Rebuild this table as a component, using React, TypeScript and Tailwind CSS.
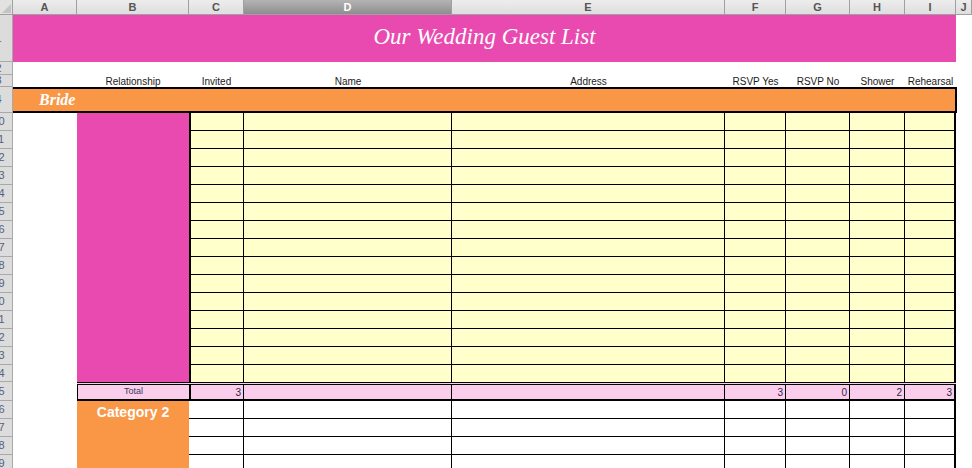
import React from "react";

// column widths of the sheet, A..J (the row-number column is 13px on its own)
const headerCols = [
  { letter: "A", w: "w-[64px]" },
  { letter: "B", w: "w-[112px]" },
  { letter: "C", w: "w-[55px]" },
  { letter: "D", w: "w-[208px]", selected: true },
  { letter: "E", w: "w-[273px]" },
  { letter: "F", w: "w-[61px]" },
  { letter: "G", w: "w-[64px]" },
  { letter: "H", w: "w-[55px]" },
  { letter: "I", w: "w-[51px]" },
  { letter: "J", w: "w-[16px]" },
];

const labels = [
  { text: "", w: "w-[64px]" },
  { text: "Relationship", w: "w-[112px]" },
  { text: "Invited", w: "w-[55px]" },
  { text: "Name", w: "w-[208px]" },
  { text: "Address", w: "w-[273px]" },
  { text: "RSVP Yes", w: "w-[61px]" },
  { text: "RSVP No", w: "w-[64px]" },
  { text: "Shower", w: "w-[55px]" },
  { text: "Rehearsal", w: "w-[51px]" },
];

// data columns C..I inside the bordered grids
const bodyCols = ["w-[53px]", "w-[208px]", "w-[273px]", "w-[61px]", "w-[64px]", "w-[55px]", "w-[49px]"];
const catCols = ["w-[55px]", "w-[208px]", "w-[273px]", "w-[61px]", "w-[64px]", "w-[55px]", "w-[49px]"];

const totals = [
  { value: "3", w: "w-[55px] border-l-2" },
  { value: "", w: "w-[208px]" },
  { value: "", w: "w-[273px]" },
  { value: "3", w: "w-[61px]" },
  { value: "0", w: "w-[64px]" },
  { value: "2", w: "w-[55px]" },
  { value: "3", w: "w-[51px] border-r-2" },
];

// row numbers are scrolled partly out of view, like in the sheet
const RowHead = ({ n, h }: { n: number; h: string }) => (
  <div
    className={`relative w-[13px] shrink-0 overflow-hidden border-r border-b border-[#a9a9a9] bg-[#dcdcdc] ${h}`}
  >
    <div className="absolute top-0 bottom-0 left-[-16px] flex w-[29px] items-center justify-center text-[11px] leading-none text-[#56607a]">
      {n}
    </div>
  </div>
);

const brideRows = Array.from({ length: 15 }, (_, i) => 10 + i);
const catRows = [26, 27, 28, 29];

const App: React.FC = () => {
  return (
    <div className="h-[468px] w-[972px] overflow-hidden bg-white font-['Liberation_Sans',Arial,sans-serif]">
      {/* Column letters */}
      <div className="flex h-[15px]">
        <div className="relative w-[13px] shrink-0 border-r border-b border-[#a0a0a0] bg-[#e2e2e2]">
          <div className="absolute right-[1px] bottom-[1px] h-0 w-0 border-b-[9px] border-l-[9px] border-b-[#c4c4c4] border-l-transparent" />
        </div>
        {headerCols.map((c) => (
          <div
            key={c.letter}
            className={`${c.w} flex shrink-0 items-center justify-center border-r border-b border-[#a0a0a0] text-[11px] font-bold leading-none ${
              c.selected
                ? "bg-gradient-to-b from-[#b4b4b4] to-[#8e8e8e] text-white"
                : "bg-gradient-to-b from-[#ededed] to-[#dedede] text-[#555]"
            }`}
          >
            {c.letter}
          </div>
        ))}
      </div>

      {/* Title row */}
      <div className="flex h-[47px]">
        <RowHead n={1} h="h-[47px]" />
        <div className="flex w-[943px] shrink-0 items-center justify-center bg-[#e84aaf] pb-[2px] font-['Liberation_Serif',serif] text-[23px] italic text-white">
          Our Wedding Guest List
        </div>
      </div>

      <div className="flex h-[13px]">
        <RowHead n={2} h="h-[13px]" />
      </div>

      {/* Column labels */}
      <div className="flex h-[12px]">
        <RowHead n={3} h="h-[12px]" />
        {labels.map((l, i) => (
          <div
            key={i}
            className={`${l.w} shrink-0 whitespace-nowrap text-center text-[10px] leading-[14px] text-[#1a1a1a]`}
          >
            {l.text}
          </div>
        ))}
      </div>

      {/* Bride bar */}
      <div className="flex h-[26px]">
        <RowHead n={4} h="h-[26px]" />
        <div className="flex w-[944px] shrink-0 items-center border-y-2 border-r-2 border-black bg-[#f99747] pl-[26px] font-['Liberation_Serif',serif] text-[16px] font-bold italic text-white">
          Bride
        </div>
      </div>

      {/* Bride rows */}
      <div className="flex">
        <div className="flex flex-col">
          {brideRows.map((n, i) => (
            <RowHead key={n} n={n} h={i === 14 ? "h-[17px]" : "h-[18px]"} />
          ))}
        </div>
        <div className="w-[64px] shrink-0 bg-white" />
        <div className="w-[112px] shrink-0 bg-[#e84aaf]" />
        <div className="flex w-[767px] shrink-0 flex-col border-x-2 border-black bg-[#ffffcc]">
          {brideRows.map((n, i) => (
            <div
              key={n}
              className={`flex ${i === 14 ? "h-[17px]" : "h-[18px] border-b border-black"}`}
            >
              {bodyCols.map((w, j) => (
                <div
                  key={j}
                  className={`${w} shrink-0 ${j < bodyCols.length - 1 ? "border-r border-black" : ""}`}
                />
              ))}
            </div>
          ))}
        </div>
      </div>

      {/* Total row */}
      <div className="flex h-[19px]">
        <RowHead n={25} h="h-[19px]" />
        <div className="w-[64px] shrink-0 bg-white" />
        <div className="flex shrink-0 border-t-[3px] border-b-2 border-double border-black bg-[#facdec] [border-bottom-style:solid]">
          <div className="flex w-[112px] shrink-0 items-center justify-center border-l border-black text-[9px] text-[#3b3b5c]">
            Total
          </div>
          {totals.map((t, i) => (
            <div
              key={i}
              className={`${t.w} flex shrink-0 items-center justify-end border-r border-black pr-[2px] text-[10px] text-[#2a2a44]`}
            >
              {t.value}
            </div>
          ))}
        </div>
      </div>

      {/* Category 2 */}
      <div className="flex">
        <div className="flex flex-col">
          {catRows.map((n) => (
            <RowHead key={n} n={n} h="h-[18px]" />
          ))}
        </div>
        <div className="w-[64px] shrink-0 bg-white" />
        <div className="w-[112px] shrink-0 bg-[#f99747] pt-[1px] text-center text-[14px] font-bold text-white">
          Category 2
        </div>
        <div className="flex w-[767px] shrink-0 flex-col border-r-2 border-black bg-white">
          {catRows.map((n) => (
            <div key={n} className="flex h-[18px] border-b border-black">
              {catCols.map((w, j) => (
                <div
                  key={j}
                  className={`${w} shrink-0 ${j < catCols.length - 1 ? "border-r border-black" : ""}`}
                />
              ))}
            </div>
          ))}
        </div>
      </div>
    </div>
  );
};

export default App;
